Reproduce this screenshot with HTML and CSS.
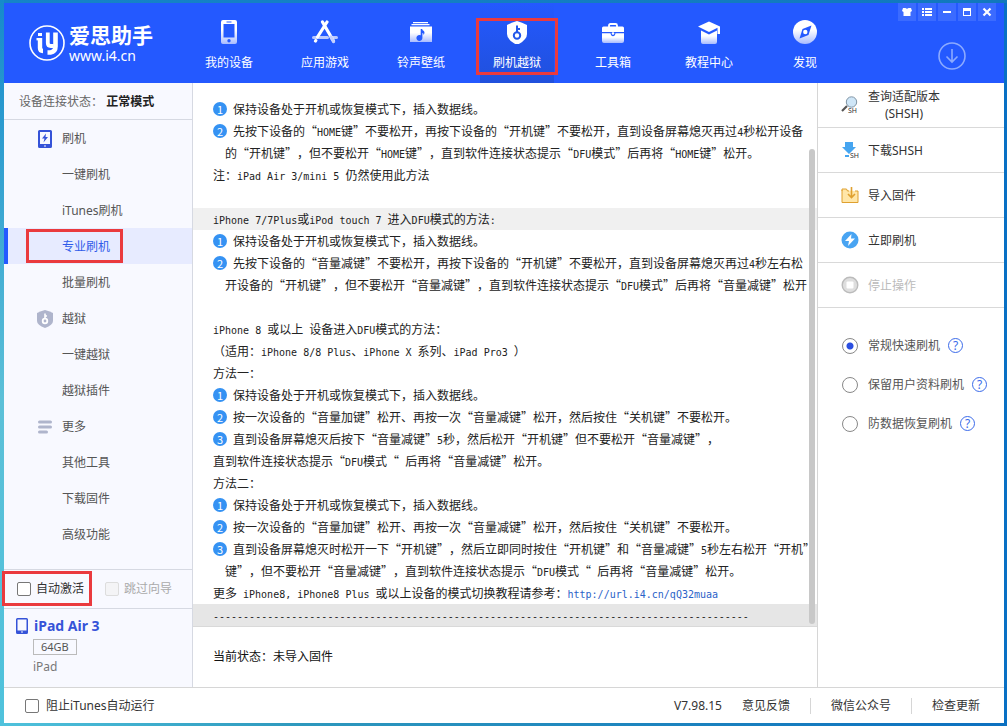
FILE: index.html
```html
<!DOCTYPE html>
<html lang="zh-CN">
<head>
    <meta charset="UTF-8">
    <meta name="viewport" content="width=device-width, initial-scale=1.0">
    <title>爱思助手</title>
    <link rel="stylesheet" href="styles.css">
</head>
<body>
<div class="app">
    <header class="header">
        <div class="logo">
            <svg class="logo-mark" viewBox="0 0 36 36" width="36" height="36" fill="none" stroke="#fff">
                <circle cx="18" cy="18" r="17" stroke-width="1.600"/>
                <path d="M7.500 14.200h4" stroke-width="2.400"/>
                <path d="M11 13v10q0 3 3 3" stroke-width="4.400"/>
                <path d="M9 9.500h4" stroke-width="3"/>
                <path d="M18.800 7.500v10.500q0 3 3 3h3" stroke-width="3.800"/>
                <path d="M26.500 7.500v14q0 5-5 6h-3" stroke-width="4.600"/>
            </svg>
            <div class="logo-text">
                <b>爱思助手</b>
                <span>www.i4.cn</span>
            </div>
        </div>
        <nav class="nav">
            <a class="nav-item" href="#">
                <svg viewBox="0 0 24 24" width="24" height="24"><path fill="url(#fade)" fill-rule="evenodd" d="M6 0h12q2 0 2 2v20q0 2-2 2H6q-2 0-2-2V2q0-2 2-2zM6.500 4v13.500h11V4zM9.500 1.500v1h5v-1zM12 19a1.700 1.700 0 1 0 0 3.400 1.700 1.700 0 0 0 0-3.400z"/></svg>
                <span>我的设备</span>
            </a>
            <a class="nav-item" href="#">
                <svg viewBox="0 0 26 24" width="26" height="24" fill="none" stroke-linecap="round"><path stroke="#b9c8ff" stroke-width="3" d="M1.500 17.500h14M20 17.500h4.500"/><path stroke="#fff" stroke-width="3.200" d="M10.500 2L21.500 21M15 2L5.500 17M3.500 21l.3-.5"/><path stroke="#c5d1ff" stroke-width="3.200" d="M19 17l2.500 4.500"/></svg>
                <span>应用游戏</span>
            </a>
            <a class="nav-item" href="#">
                <svg viewBox="0 0 24 24" width="24" height="24"><path fill="#fff" d="M4 2h15v1.200H4zM2.500 4h18v1.300h-18z"/><path fill="url(#fade)" fill-rule="evenodd" d="M1 6.500h22V22H1zM11.700 9v6.300a3 3 0 1 0 1.700 2.700v-5c1 .2 1.300 1 1 2 2-2 1-4-.8-4.700L13.200 9z"/></svg>
                <span>铃声壁纸</span>
            </a>
            <a class="nav-item active marked" href="#">
                <svg viewBox="0 0 24 24" width="24" height="24"><path fill="#fff" d="M12 1q5 1.500 10 4v9q0 6-10 11Q2 20 2 14V5q5-2.500 10-4z"/><circle cx="12" cy="15.500" r="3.200" fill="none" stroke="#2257ea" stroke-width="2"/><path fill="none" stroke="#2257ea" stroke-width="2" d="M12 13V5.500M12 9h3"/></svg>
                <span>刷机越狱</span>
            </a>
            <a class="nav-item" href="#">
                <svg viewBox="0 0 24 24" width="24" height="24"><path fill="none" stroke="#fff" stroke-width="1.800" d="M8 7V5.500q0-1.500 1.500-1.500h5q1.500 0 1.500 1.500V7"/><path fill="#fff" d="M2.500 6.500h19q1.500 0 1.500 1.500v4H1V8q0-1.500 1.500-1.500z"/><path fill="url(#fade)" d="M1 13.200h8.500q.5 3 2.500 3t2.500-3H23V21q0 2-2 2H3q-2 0-2-2z"/><path fill="#2459ff" d="M10 12h4v1.500H10z"/><circle cx="12" cy="13.500" r="1.300" fill="#fff"/></svg>
                <span>工具箱</span>
            </a>
            <a class="nav-item" href="#">
                <svg viewBox="0 0 24 24" width="24" height="24"><path fill="#fff" d="M12 1.500L1 6.500l11 5.500 8.500-4.200V14h2.500V6.500z"/><path fill="url(#fade)" d="M4 10.500l8 4 8-4V22q0 2-2 2H6q-2 0-2-2z"/></svg>
                <span>教程中心</span>
            </a>
            <a class="nav-item" href="#">
                <svg viewBox="0 0 24 24" width="24" height="24"><circle cx="12" cy="12" r="12" fill="url(#fade)"/><path fill="#2459ff" d="M18.500 5.500l-3 9.500-9 3.500L9.500 9z"/><circle cx="12.300" cy="12" r="2.200" fill="#fff"/></svg>
                <span>发现</span>
            </a>
        </nav>
        <div class="header-right">
            <div class="win-buttons">
                <button aria-label="皮肤"><svg viewBox="0 0 12 12" width="12" height="12" fill="#fff"><path d="M2 2h2.500q1.500 1.500 3 0H10l1 3-1.500 1v4h-7V6L1 5z"/></svg></button>
                <button aria-label="菜单"><svg viewBox="0 0 12 12" width="12" height="12" fill="#fff"><path d="M1 2h2v2H1zM4 2h7v2H4zM1 5h2v2H1zM4 5h7v2H4zM1 8h2v2H1zM4 8h7v2H4z"/></svg></button>
                <button aria-label="最小化"><svg viewBox="0 0 12 12" width="12" height="12" fill="#fff"><path d="M2 5h8v2H2z"/></svg></button>
                <button aria-label="最大化"><svg viewBox="0 0 12 12" width="12" height="12" fill="#fff"><path fill-rule="evenodd" d="M2 2h8v8H2zM3 5v4h6V5z"/></svg></button>
                <button aria-label="关闭"><svg viewBox="0 0 12 12" width="12" height="12" stroke="#fff" stroke-width="2.200"><path d="M2.500 2.500l7 7M9.500 2.500l-7 7"/></svg></button>
            </div>
            <button class="download" aria-label="下载">
                <svg viewBox="0 0 28 28" width="28" height="28" fill="none" stroke="#8caaff" stroke-width="1.600"><circle cx="14" cy="14" r="13"/><path d="M14 7v13M8.500 14.500L14 20l5.500-5.500"/></svg>
            </button>
        </div>
    </header>

    <div class="content">
        <aside class="sidebar">
            <div class="state">设备连接状态： <b>正常模式</b></div>
            <nav class="menu">
                <a class="menu-item" href="#"><svg viewBox="0 0 14 18" width="14" height="18"><path fill="#3553d8" fill-rule="evenodd" d="M1.500 0h11Q14 0 14 1.500v15q0 1.500-1.500 1.500h-11Q0 18 0 16.500v-15Q0 0 1.500 0zM2 2v12h10V2zM6 15.500v1h2v-1z"/><path fill="#3553d8" d="M8 3.500L4 8.500h2.500L5.500 12.500 10 7H7.500z"/></svg>刷机</a>
                <a class="menu-item" href="#">一键刷机</a>
                <a class="menu-item" href="#">iTunes刷机</a>
                <a class="menu-item active marked" href="#">专业刷机</a>
                <a class="menu-item" href="#">批量刷机</a>
                <a class="menu-item" href="#"><svg viewBox="0 0 16 18" width="16" height="18"><path fill="#afb5cc" d="M8 0q4 1 8 3v8q0 4-8 7-8-3-8-7V3q4-2 8-3z"/><circle cx="8" cy="11" r="2.300" fill="none" stroke="#fff" stroke-width="1.800"/><path fill="none" stroke="#fff" stroke-width="1.600" d="M8 9V3.500M8 6h2"/></svg>越狱</a>
                <a class="menu-item" href="#">一键越狱</a>
                <a class="menu-item" href="#">越狱插件</a>
                <a class="menu-item" href="#"><svg viewBox="0 0 14 14" width="14" height="14" stroke="#afb5cc" stroke-width="3" stroke-linecap="round"><path d="M1.500 2h11M1.500 7h11M1.500 12h7"/></svg>更多</a>
                <a class="menu-item" href="#">其他工具</a>
                <a class="menu-item" href="#">下载固件</a>
                <a class="menu-item" href="#">高级功能</a>
            </nav>
            <div class="options">
                <label class="check marked"><input type="checkbox">自动激活</label>
                <label class="check disabled"><input type="checkbox" disabled>跳过向导</label>
            </div>
            <div class="device">
                <div class="device-name">
                    <svg viewBox="0 0 12 16" width="12" height="16"><path fill="#3553d8" fill-rule="evenodd" d="M1.500 0h9Q12 0 12 1.500v13q0 1.500-1.500 1.500h-9Q0 16 0 14.500v-13Q0 0 1.500 0zM1.500 1.500v11h9v-11zM5 13.500v1h2v-1z"/></svg>
                    <b>iPad Air 3</b>
                </div>
                <span class="capacity">64GB</span>
                <span class="model">iPad</span>
            </div>
        </aside>

        <main class="main">
            <div class="guide">
                <p><i>1</i>保持设备处于开机或恢复模式下，插入数据线。</p>
                <p><i>2</i>先按下设备的“<span>HOME</span>键”不要松开，再按下设备的“开机键”不要松开，直到设备屏幕熄灭再过<span>4</span>秒松开设备</p>
                <p class="indent">的“开机键”，但不要松开“<span>HOME</span>键”，直到软件连接状态提示“<span>DFU</span>模式”后再将“<span>HOME</span>键”松开。</p>
                <p>注：<span>iPad Air 3/mini 5 </span>仍然使用此方法</p>
                <p></p>
                <p class="band"><span>iPhone 7/7Plus</span>或<span>iPod touch 7 </span>进入<span>DFU</span>模式的方法<span>:</span></p>
                <p><i>1</i>保持设备处于开机或恢复模式下，插入数据线。</p>
                <p><i>2</i>先按下设备的“音量减键”不要松开，再按下设备的“开机键”不要松开，直到设备屏幕熄灭再过<span>4</span>秒左右松</p>
                <p class="indent">开设备的“开机键”，但不要松开“音量减键”，直到软件连接状态提示“<span>DFU</span>模式”后再将“音量减键”松开</p>
                <p></p>
                <p><span>iPhone 8 </span>或以上<span> </span>设备进入<span>DFU</span>模式的方法：</p>
                <p>（适用：<span>iPhone 8/8 Plus</span>、<span>iPhone X </span>系列、<span>iPad Pro3 </span>）</p>
                <p>方法一：</p>
                <p><i>1</i>保持设备处于开机或恢复模式下，插入数据线。</p>
                <p><i>2</i>按一次设备的“音量加键”松开、再按一次“音量减键”松开，然后按住“关机键”不要松开。</p>
                <p><i>3</i>直到设备屏幕熄灭后按下“音量减键”<span>5</span>秒，然后松开“开机键”但不要松开“音量减键”，</p>
                <p>直到软件连接状态提示“<span>DFU</span>模式“<span> </span>后再将“音量减键”松开。</p>
                <p>方法二：</p>
                <p><i>1</i>保持设备处于开机或恢复模式下，插入数据线。</p>
                <p><i>2</i>按一次设备的“音量加键”松开、再按一次“音量减键”松开，然后按住“关机键”不要松开。</p>
                <p><i>3</i>直到设备屏幕熄灭时松开一下“开机键”，然后立即同时按住“开机键”和“音量减键”<span>5</span>秒左右松开“开机”</p>
                <p class="indent">键”，但不要松开“音量减键”，直到软件连接状态提示“<span>DFU</span>模式“<span> </span>后再将“音量减键”松开。</p>
                <p>更多<span> iPhone8, iPhone8 Plus </span>或以上设备的模式切换教程请参考：<a href="#">http://url.i4.cn/qQ32muaa</a></p>
                <p class="band last"><span>-----------------------------------------------------------------------------------------</span></p>
                <div class="scrollbar"></div>
            </div>
            <div class="status">当前状态：未导入固件</div>
        </main>

        <aside class="actions">
            <button class="action">
                <svg viewBox="0 0 18 18" width="18" height="18"><path stroke="#555" stroke-width="2.200" d="M1 15l5-5"/><circle cx="10.500" cy="6" r="5.200" fill="#cfe6f7" stroke="#8095a5"/><text class="tag" x="7" y="17">SH</text></svg>
                <span>查询适配版本<br>(SHSH)</span>
            </button>
            <button class="action">
                <svg viewBox="0 0 18 18" width="18" height="18"><path fill="#46a5f0" d="M4 1h8v5h3l-7 7-7-7h3zM4 14h4v2H4z"/><text class="tag" x="9" y="17">SH</text></svg>
                <span>下载SHSH</span>
            </button>
            <button class="action">
                <svg viewBox="0 0 18 18" width="18" height="18" fill="none" stroke="#dfa02f"><path fill="#ffe6a8" d="M1 4V16.500h16V5h-3M8 5H6.500l-1-2H1v2"/><path stroke-width="1.600" d="M10.500 1v10M7 8l3.500 3.500L14 8"/></svg>
                <span>导入固件</span>
            </button>
            <button class="action">
                <svg viewBox="0 0 18 18" width="18" height="18"><circle cx="9" cy="9" r="8.500" fill="#48a4f2"/><path fill="#fff" d="M10.500 3L4 10h4l-1 5 7-7.500h-4z"/></svg>
                <span>立即刷机</span>
            </button>
            <button class="action" disabled>
                <svg viewBox="0 0 18 18" width="18" height="18"><circle cx="9" cy="9" r="7.800" fill="#dedede" stroke="#bbb" stroke-width="1.400"/><rect x="5.500" y="5.500" width="7" height="7" rx="1" fill="#fff"/></svg>
                <span>停止操作</span>
            </button>
            <div class="modes">
                <div class="mode"><label><input type="radio" name="mode" checked>常规快速刷机</label><button class="help" aria-label="帮助">?</button></div>
                <div class="mode"><label><input type="radio" name="mode">保留用户资料刷机</label><button class="help" aria-label="帮助">?</button></div>
                <div class="mode"><label><input type="radio" name="mode">防数据恢复刷机</label><button class="help" aria-label="帮助">?</button></div>
            </div>
        </aside>
    </div>

    <footer class="footer">
        <label class="check"><input type="checkbox">阻止iTunes自动运行</label>
        <span class="version">V7.98.15</span>
        <a href="#">意见反馈</a>
        <a href="#">微信公众号</a>
        <a href="#">检查更新</a>
    </footer>
</div>

<!-- shared gradient for the nav icons -->
<svg class="defs" width="0" height="0">
    <linearGradient id="fade" x1="0" y1="0" x2="0" y2="1">
        <stop offset="0.400" stop-color="#fff"/>
        <stop offset="1" stop-color="#a9bcff"/>
    </linearGradient>
</svg>
</body>
</html>
```

FILE: styles.css
```css
*,
*::after {
    box-sizing: border-box;
}

body {
    margin: 0;
    padding: 3px 3px 3px 4px;
    height: 100vh;
    font: 12px/18px "Noto Sans", "Noto Sans CJK SC", sans-serif;
    color: #333;
    /* desktop showing round the window */
    background:
        linear-gradient(#168acb, #5cc0d8 55%, #4fc2dc) left / 4px 100% no-repeat,
        linear-gradient(to right, #1584c8, #1178bd) top / 100% 3px no-repeat,
        linear-gradient(to right, #4fc2dc, #2d98bd 30%, #0c70c0) bottom / 100% 3px no-repeat,
        #0870c4;
}

a {
    color: inherit;
    text-decoration: none;
}

button {
    border: none;
    padding: 0;
    background: none;
    font: inherit;
    color: inherit;
    cursor: pointer;
}

svg {
    display: block;
    flex: none;
}

.defs {
    position: absolute;
}

.app {
    height: 100%;
    display: flex;
    flex-direction: column;
    background: #fff;
}

/* red frame round an item */
.marked {
    position: relative;
}

.marked::after {
    content: "";
    position: absolute;
    border: 3px solid #ea3a3e;
}

/* header */
.header {
    flex: none;
    height: 80px;
    display: flex;
    background: #2459ff;
    color: #fff;
}

.logo {
    width: 177px;
    padding-left: 25px;
    display: flex;
    align-items: center;
    gap: 4px;
}

.logo-text {
    padding-top: 2px;
    display: flex;
    flex-direction: column;
}

.logo-text b {
    font-size: 21px;
    line-height: 24px;
}

.logo-text span {
    font-size: 14px;
    line-height: 18px;
}

.nav {
    display: flex;
}

.nav-item {
    width: 96px;
    padding-top: 17px;
    display: flex;
    flex-direction: column;
    align-items: center;
    gap: 10px;
}

.nav-item.active {
    background: linear-gradient(#2459ff, #2050dc) center / 74px 100% no-repeat;
}

.nav-item.marked::after {
    inset: 15px 7px 8px;
}

.header-right {
    margin-left: auto;
    padding-right: 8px;
    display: flex;
    flex-direction: column;
    align-items: flex-end;
    gap: 21px;
}

.win-buttons {
    display: flex;
    gap: 2px;
}

.win-buttons button {
    width: 18px;
    height: 18px;
    display: flex;
    align-items: center;
    justify-content: center;
    background: #3b6bff;
}

.download {
    margin-right: 30px;
}

/* three columns */
.content {
    flex: 1;
    display: flex;
    min-height: 0;
}

.sidebar {
    flex: none;
    width: 189px;
    display: flex;
    flex-direction: column;
    background: #f8f9ff;
    border-right: 1px solid #d6d9e2;
}

.state {
    height: 37px;
    padding-left: 15px;
    line-height: 37px;
    border-bottom: 1px solid #d6d9e2;
    color: #666;
}

.state b {
    color: #222;
}

.menu {
    flex: 1;
}

.menu-item {
    height: 36px;
    padding-top: 1px;
    padding-left: 58px;
    display: flex;
    align-items: center;
    color: #555;
}

.menu-item svg {
    width: 16px;
    margin-left: -25px;
    margin-right: 9px;
}

.menu-item.active {
    padding-left: 54px;
    border-left: 4px solid #2459ff;
    background: #e7ebff;
    color: #2f5bea;
}

.menu-item.marked::after {
    left: 18px;
    top: 1px;
    width: 97px;
    height: 34px;
}

.options {
    height: 39px;
    padding-left: 13px;
    display: flex;
    gap: 21px;
    border-top: 1px solid #d6d9e2;
}

.check {
    display: flex;
    align-items: center;
    gap: 5px;
}

.check.disabled {
    color: #aaa;
}

.check input {
    appearance: none;
    width: 14px;
    height: 14px;
    margin: 0;
    border: 1px solid #777;
    border-radius: 2px;
    background: #fff;
}

.check.disabled input {
    border-color: #ddd;
    background: #f4f4f6;
}

.options .marked::after {
    inset: 1px -8px 2px -15px;
}

.device {
    height: 79px;
    padding: 7px 12px;
    border-top: 1px solid #d6d9e2;
    display: flex;
    flex-direction: column;
    align-items: flex-start;
}

.device-name {
    display: flex;
    align-items: center;
    gap: 6px;
    font-size: 14px;
    line-height: 20px;
    color: #3553d8;
}

.capacity {
    margin: 3px 0 3px 17px;
    padding: 0 7px;
    border: 1px solid #bbb;
    font-size: 11px;
    line-height: 14px;
    color: #555;
}

.model {
    margin-left: 17px;
    color: #777;
}

.main {
    flex: 1;
    min-width: 0;
    display: flex;
    flex-direction: column;
}

.guide {
    position: relative;
    padding-top: 15px;
    font-family: "Noto Sans CJK SC", sans-serif;
    text-spacing-trim: space-all;
    text-autospace: no-autospace;
    color: #222;
}

.guide p {
    height: 22px;
    margin: 0;
    padding-left: 20px;
    line-height: 22px;
    white-space: pre;
}

/* latin runs take half a character cell per letter */
.guide span,
.guide a {
    font-family: "DejaVu Sans Mono", monospace;
    font-size: 10px;
    line-height: 1;
}

.guide a {
    color: #2a62c8;
}

.guide i {
    display: inline-block;
    width: 14px;
    height: 14px;
    margin-right: 6px;
    border-radius: 50%;
    background: #3592f3;
    color: #fff;
    font-style: normal;
    font-size: 11px;
    line-height: 14px;
    text-align: center;
}

.guide .indent {
    padding-left: 32px;
}

.guide .band {
    background: #f0f0f0;
}

.guide .last {
    height: 23px;
    background: #e6e6e6;
    border-bottom: 1px solid #d9d9d9;
}

.scrollbar {
    position: absolute;
    top: 66px;
    right: 2px;
    bottom: 3px;
    width: 6px;
    border-radius: 3px;
    background: #c8c8c8;
}

.status {
    padding: 21px 20px;
    color: #111;
}

.actions {
    flex: none;
    width: 187px;
    border-left: 1px solid #d6d6d6;
}

.action {
    width: 100%;
    height: 45px;
    padding-left: 23px;
    display: flex;
    align-items: center;
    gap: 9px;
    border-bottom: 1px solid #d9d9d9;
    line-height: 17px;
}

.action:disabled {
    color: #bbb;
}

.tag {
    font: 7px "Noto Sans", sans-serif;
    fill: #333;
}

.modes {
    padding: 18px 0 0 24px;
}

.mode {
    height: 39px;
    display: flex;
    align-items: center;
    gap: 8px;
    color: #555;
}

.mode label {
    display: flex;
    align-items: center;
    gap: 10px;
}

.mode input {
    appearance: none;
    width: 16px;
    height: 16px;
    margin: 0;
    border: 1px solid #888;
    border-radius: 50%;
}

.mode input:checked {
    background: radial-gradient(circle, #2b4fe0 3px, #fff 4px);
}

.help {
    width: 15px;
    height: 15px;
    border: 1px solid #3b6bea;
    border-radius: 50%;
    line-height: 13px;
    color: #3b6bea;
}

/* bottom bar */
.footer {
    flex: none;
    height: 36px;
    padding: 0 24px 0 21px;
    display: flex;
    align-items: center;
    border-top: 1px solid #d6d6d6;
}

.footer .check {
    gap: 7px;
}

.version {
    margin-left: auto;
    margin-right: 20px;
}

.footer a + a {
    margin-left: 20px;
    padding-left: 20px;
    border-left: 1px solid #d6d6d6;
    line-height: 16px;
}
```
